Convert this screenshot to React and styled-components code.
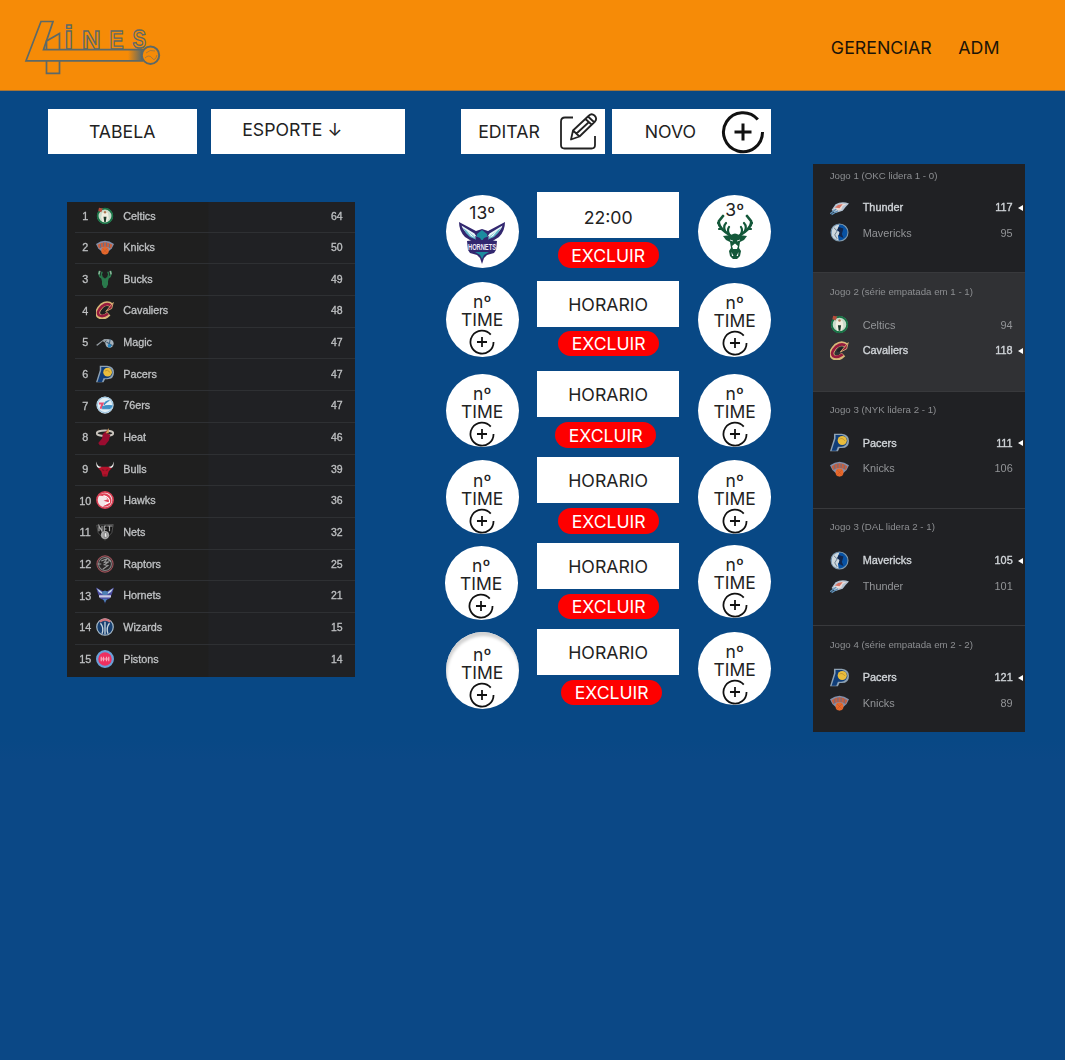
import React from "react";
import styled, { createGlobalStyle } from "styled-components";

const GlobalStyle = createGlobalStyle`
  * { box-sizing: border-box; }
  body { margin: 0; background: #084885; font-family: Inter, "Liberation Sans", sans-serif; }
`;

const Page = styled.div`
  height: 1060px;
  overflow: hidden;
  background: linear-gradient(#084885 0 740px, #0b4886 760px);
`;
const Header = styled.header`
  height: 91px;
  display: flex;
  justify-content: space-between;
  background: #f68b07;
  border-bottom: 1px solid #a87435;
`;
const Nav = styled.nav`
  display: flex;
  gap: 26.5px;
  padding: 36.5px 65.5px 0 0;
`;
const NavLink = styled.a`
  font-size: 17.8px;
  line-height: 22px;
  color: #1c1408;
`;
const Main = styled.main`
  display: flex;
  align-items: flex-start;
  padding-left: 47.7px;
`;
const LeftColumn = styled.section`
  width: 398px;
  padding-top: 18.3px;
`;
const CenterColumn = styled.section`
  width: 367px;
  padding-top: 18.3px;
`;
const Toolbar = styled.div`
  display: flex;
  gap: ${(p) => p.$gap}px;
  padding-left: ${(p) => p.$indent || 0}px;
`;
const Button = styled.button`
  display: flex;
  align-items: center;
  justify-content: ${(p) => (p.$center ? "center" : "flex-start")};
  gap: ${(p) => p.$gap || 0}px;
  width: ${(p) => p.$w}px;
  height: 45px;
  border: 0;
  padding: 0 0 ${(p) => p.$lift || 0}px ${(p) => p.$left || 0}px;
  background: #fff;
  font: 400 17.7px/22px Inter, sans-serif;
  color: #222;
  white-space: nowrap;
  svg { flex: none; }
`;

/* standings */
const Standings = styled.div`
  width: 288px;
  margin: 47.5px 0 0 19px;
  padding-left: 8px;
  height: 475px;
  background: linear-gradient(90deg, #1f1f1f 0 141px, #202124 142px);
  font-family: "Liberation Sans", Arial, sans-serif;
`;
const Standing = styled.div`
  display: grid;
  grid-template-columns: 21px 18px 1fr 40px;
  align-items: center;
  height: ${(p) => (p.$first ? 30 : 31.68)}px;
  padding: 0 12px 2.5px 0;
  border-top: ${(p) => (p.$first ? "0" : "1px solid #2e3033")};
  font-size: 10.8px;
  color: #bfc1c3;
  -webkit-text-stroke: 0.3px #bfc1c3;
  > * { filter: blur(0.45px); }
`;
const Rank = styled.span`text-align: center; padding-top: 1px;`;
const Name = styled.span`padding-left: 9.5px;`;
const Points = styled.span`text-align: right; font-size: 10.5px;`;

/* schedule */
const Schedule = styled.div`padding-top: 38px;`;
const Match = styled.div`
  display: grid;
  grid-template-columns: 92px 141px 73px;
  column-gap: 0;
  justify-content: start;
  align-items: start;
  height: ${(p) => p.$h}px;
`;
const Team = styled.div`
  display: flex;
  flex-direction: column;
  align-items: center;
  width: 73px;
  height: ${(p) => p.$h || 73.5}px;
  margin-top: ${(p) => p.$top}px;
  margin-left: ${(p) => p.$x || 0}px;
  padding-top: ${(p) => p.$pad || 11}px;
  border-radius: 50%;
  background: #fff;
  box-shadow: ${(p) => (p.$shade ? "inset 1px 4px 3px #d2d2d2" : "none")};
  font-size: 17.5px;
  line-height: 18px;
  color: #222;
  svg { flex: none; display: block; }
`;
const Slot = styled.div`display: flex; flex-direction: column; align-items: center;`;
const Time = styled.div`
  width: 141.5px;
  height: 45.7px;
  display: flex;
  align-items: center;
  justify-content: center;
  padding-top: ${(p) => p.$drop || 0}px;
  background: #fff;
  font-size: 17.7px;
  color: #222;
`;
const Remove = styled.button`
  width: 101px;
  height: 25.5px;
  margin: ${(p) => p.$top}px 0 0 ${(p) => p.$x}px;
  padding: 0;
  border: 0;
  border-radius: 13px;
  background: #fe0000;
  color: #fff;
  font: 400 17.6px/25px Inter, sans-serif;
`;
const AwaySide = styled.div`padding-left: 19.5px;`;

/* playoffs */
const Playoffs = styled.aside`
  width: 212px;
  margin-top: 72.7px;
  font-family: "Liberation Sans", Arial, sans-serif;
`;
const Game = styled.article`
  height: ${(p) => p.$h}px;
  padding: ${(p) => p.$pad}px 0 0 17px;
  background: ${(p) => (p.$active ? "#303134" : "#202124")};
  border-top: ${(p) => (p.$plain ? "0" : "1px solid #38393c")};
`;
const GameTitle = styled.div`
  height: 12px;
  margin-bottom: ${(p) => p.$gap || 13.5}px;
  font-size: 9.7px;
  line-height: 12px;
  color: #8c8e91;
  white-space: nowrap;
  filter: blur(0.35px);
`;
const Side = styled.div`
  display: grid;
  grid-template-columns: 19px 1fr 40px 12px;
  align-items: center;
  height: 25.7px;
  font-size: 10.9px;
  color: ${(p) => (p.$win ? "#d0d4d8" : "#929497")};
  -webkit-text-stroke: ${(p) => (p.$win ? 0.35 : 0)}px currentColor;
  > * { filter: blur(0.35px); }
`;
const SideName = styled.span`padding-left: 14px;`;
const Score = styled.span`text-align: right;`;
const Winner = styled.span`
  width: 0;
  height: 0;
  margin-left: 5.5px;
  margin-top: 1px;
  border: 3px solid transparent;
  border-right: 5px solid #fff;
  border-left: 0;
`;

const marks = {
  Celtics: (
    <>
      <circle cx="12" cy="12" r="10.5" fill="#c9dccb" />
      <circle cx="12" cy="12" r="9.8" fill="none" stroke="#197346" strokeWidth="2.4" />
      <path d="M8 8l4-3 4 3 1 7-3 5H9l-2-6z" fill="#f0eee0" />
      <path d="M10 13h4l-1 7h-2z" fill="#18382a" />
      <path d="M4 1l5 1-2 5-4-2z" fill="#b74c3c" />
      <circle cx="12" cy="7" r="1.6" fill="#ac7954" />
    </>
  ),
  Knicks: (
    <>
      <path d="M0 8q12-9 24 0l-3 6-9 8-9-8z" fill="#8290ac" />
      <path d="M2 9q10-7 20 0l-2 5q-8-5-16 0z" fill="#c66040" />
      <path d="M6 8v5M10 6v5M14 6v5M18 8v5" stroke="#686e86" strokeWidth="1.3" />
      <circle cx="12" cy="17" r="5" fill="#e8682a" />
      <path d="M9 14l6 6M15 14l-6 6" stroke="#b95630" strokeWidth=".7" />
    </>
  ),
  Bucks: (
    <g fill="none" stroke="#2a7a4c" strokeWidth="2" strokeLinecap="round">
      <path d="M10 11Q3 10 4 2M14 11q7-1 6-9M8 9Q6 6 8 3M16 9q2-3 0-6" />
      <path d="M4 5L5 2M20 5l-1-3" stroke="#8fb39c" />
      <path d="M8 11l2 1h4l2-1-1 4v4l-2 4h-2l-2-4v-4z" fill="#2a7a4c" />
    </g>
  ),
  Cavaliers: (
    <>
      <path d="M21 6Q15 1 8 6q-9 9-4 14 6 4 13-3" fill="none" stroke="#d9b878" strokeWidth="6.4" />
      <path d="M20 6Q15 2 8 7q-8 8-4 12 5 3 12-2" fill="none" stroke="#961a3e" strokeWidth="3.4" />
      <path d="M9 14Q8 10 14 8l4 0-3 5z" fill="#202124" />
      <path d="M13 14L23 2l-2 8z" fill="#961a3e" stroke="#d9b878" strokeWidth="1.1" />
    </>
  ),
  Magic: (
    <>
      <path d="M0 16L11 8h8l-7 3 2 3-5-3-7 6z" fill="#939ba1" />
      <circle cx="18" cy="14" r="5.5" fill="#a8b4be" />
      <path d="M14 12l8 5M19 8l-2 11" stroke="#3e5e78" strokeWidth="1.4" />
      <circle cx="18" cy="17" r="2.4" fill="#2483bf" />
    </>
  ),
  Pacers: (
    <>
      <path d="M5 1h10q9 1 9 9 0 9-9 9h-3l-2 4H0L5 7z" fill="#8ea2b4" />
      <path d="M7 2.5h8q7 2 7 8-1 6-8 7h-4l-2 5H2L7 7z" fill="#103d78" />
      <circle cx="15.5" cy="9.5" r="5.8" fill="#e9bd3c" />
      <path d="M12 8q3-3 7 2" stroke="#b98d2e" fill="none" />
    </>
  ),
  "76ers": (
    <>
      <circle cx="12" cy="12" r="11.5" fill="#e2eff6" />
      <circle cx="12" cy="12" r="10.3" fill="none" stroke="#9cc4e0" strokeWidth="1.4" />
      <path d="M4 10h5l-3 7" stroke="#e64f73" strokeWidth="2.6" fill="none" />
      <path d="M18 6q-7 1-7 6M9 14q6-2 12-1-1 4-5 4H9z" stroke="#3f8fc6" strokeWidth="1.6" fill="#3f8fc6" />
    </>
  ),
  Heat: (
    <>
      <ellipse cx="12" cy="7" rx="11" ry="3.6" fill="none" stroke="#c9c4bd" strokeWidth="2.5" />
      <path d="M9 8l7-6-1 6 4 1-2 8-5 6H5l-2-3 5-6z" fill="#9a0c30" />
      <path d="M14 5l3-5v7h-4z" fill="#ce9c56" />
    </>
  ),
  Bulls: (
    <>
      <path d="M1 2q0 7 6 7l2 2H5Q-1 10 1 2zM23 2q0 7-6 7l-2 2h4q6-1 4-9z" fill="#f1eeee" />
      <path d="M3 11l5-2h8l5 2-4 4-2 7H9l-2-7z" fill="#b3122b" />
      <path d="M8 13l3 1M16 13l-3 1M10 20h4" stroke="#6a101c" />
    </>
  ),
  Hawks: (
    <>
      <circle cx="12" cy="12" r="10.8" fill="#f3e6e8" stroke="#dc4156" strokeWidth="2.2" />
      <path d="M3 6q8-6 15 0 4 5 2 10-4 6-11 5l8-6-7-2 6-2-4-4z" fill="#dd4156" />
      <path d="M10 6q9 3 8 9l-6 3" stroke="#fff" strokeWidth="1.5" fill="none" />
    </>
  ),
  Nets: (
    <>
      <path d="M1 3l22-1-2 11-9 10-9-10z" fill="#151515" stroke="#777" strokeWidth=".8" />
      <path d="M4 11V4l4 7V4M15 4h7M18 4v7M11 4h3M11 8h3M11 4v7" stroke="#aaa" strokeWidth="1.6" />
      <circle cx="12" cy="16" r="5.4" fill="#aaa" />
      <path d="M11 13v6h2q4-1 1-3 2-2-1-3z" fill="#eee" stroke="#444" strokeWidth=".7" />
    </>
  ),
  Raptors: (
    <>
      <circle cx="12" cy="12" r="10.8" fill="#2a2728" stroke="#a0525a" strokeWidth="1.4" />
      <circle cx="12" cy="12" r="8.6" fill="none" stroke="#858585" strokeWidth="1.4" />
      <path d="M7 8l8-3-4 5 6-1-6 4 5 1-7 5M2 12h5M16 6l4 3" stroke="#999" strokeWidth="1.4" fill="none" />
    </>
  ),
  Hornets: (
    <>
      <path d="M0 2l9 5h6l9-5-3 9-3 6-5 2-1 5-1-5-5-2-3-6z" fill="#4a4aa0" />
      <path d="M1 3l7 5 1 3-5-3zM23 3l-7 5-1 3 5-3z" fill="#c5d9ee" />
      <path d="M8 8l4-2 4 2-1 4H9zM9 17h6l-3 5z" fill="#4d7fb5" />
      <path d="M4 12.3h16v3H4z" fill="#c9c9e4" />
    </>
  ),
  Wizards: (
    <>
      <circle cx="12" cy="12" r="11" fill="#173f70" stroke="#a6bac9" strokeWidth="1.6" />
      <path d="M5 5Q12-1 19 5" stroke="#d0777f" strokeWidth="3" fill="none" />
      <path d="M12 5v17M6 7q5 6 2 14M18 7q-5 6-2 14" stroke="#ccd8df" strokeWidth="1.7" fill="none" />
    </>
  ),
  Pistons: (
    <>
      <circle cx="12" cy="12" r="10.5" fill="#ee2f60" stroke="#6aa0d8" strokeWidth="3" />
      <path d="M6 12h12M7 9v6M10 9v6M14 9v6M17 9v6" stroke="#f6aabc" strokeWidth="1.6" />
    </>
  ),
  Thunder: (
    <>
      <path d="M2 15L7 8q8-5 17-1l-4 4-4 5-9 3z" fill="#b4c3d3" />
      <path d="M5 13l9-6 7 1-5 2-2 5-7 1z" fill="#eadcd8" />
      <path d="M6 12q5-5 10-4l-4 5z" fill="#d77363" />
      <path d="M0 20l8-6M2 21l8-5" stroke="#5f92bb" strokeWidth="1.6" />
    </>
  ),
  Mavericks: (
    <>
      <circle cx="12" cy="12" r="10.7" fill="#0751a2" stroke="#7f98ab" strokeWidth="1.4" />
      <path d="M12 2Q2 3 2 12t9 10l-1-6 3-4-4-3z" fill="#cdd7dd" />
      <path d="M11 5l6 2-2 7 2 5-6-3 1-5-3-2z" fill="#12264b" />
      <path d="M5 6l4 4-3 5 3 5" stroke="#56697b" fill="none" />
    </>
  ),
};

const Logo = ({ team, size = 18 }) => (
  <svg width={size} height={size} viewBox="0 0 24 24">{marks[team]}</svg>
);

const HornetsMark = () => (
  <svg width="46" height="43" viewBox="0 0 46 43">
    <path d="M0 0l17 9 6-2 6 2L46 0q0 9-6 15l-8 5H14l-8-5Q0 9 0 0z" fill="#32276f" />
    <path d="M2.500 3.500l13 8 4 6-8-4Q4 9 2.500 3.500zM43.500 3.500l-13 8-4 6 8-4q7.500-4 9-10z" fill="#e8f5f8" />
    <path d="M4 6l11 8 3 4-7-3Q6 11 4 6zM42 6l-11 8-3 4 7-3q5-4 7-9z" fill="#5fb6c8" />
    <path d="M7 8l9 8-4-2zM39 8l-9 8 4-2z" fill="#fff" />
    <path d="M18 12l5-4 5 4 1 6H17z" fill="#1b8b9f" />
    <path d="M16 14l5 2 2 3 2-3 5-2-2 7H18z" fill="#32276f" />
    <path d="M8 19l8-1h14l8 1-1 9-2 3-7 2-3 3-2 6-2-6-3-3-7-2-2-3z" fill="#32276f" />
    <text x="9" y="27.5" fontFamily="Liberation Sans, sans-serif" fontWeight="700" fontSize="8.5" textLength="28" lengthAdjust="spacingAndGlyphs" fill="#eee9f6">HORNETS</text>
    <path d="M16 30h14l-5 3-2 4-2-4z" fill="#1b8b9f" />
  </svg>
);
const BucksMark = () => (
  <svg width="36" height="45" viewBox="0 0 36 45">
    <g fill="none" stroke="#14583a" strokeLinecap="round" strokeLinejoin="round">
      <path strokeWidth="2.7" d="M14 22Q8 18 5 15 1 11 2 7L6 2M22 22q6-4 9-7 4-4 3-8L30 2" />
      <path strokeWidth="2.200" d="M3 12L1 9M33 12l2-3M8 17Q6 12 9 9M28 17q2-5-1-8M12 20q-2-4 0-7M24 20q2-4 0-7M5 15l-3 0M31 15h3" />
    </g>
    <path d="M6 22l8-1q4-3 8 0l8 1-3 4-4 2-1 6 2 3-1 5-3 3h-4l-3-3-1-5 2-3-1-6-4-2z" fill="#14583a" />
    <path d="M15 32l3-2.500 3 2.500-1 3h-4zM14.500 38l2 4h-1.500zM21.500 38l-2 4h1.500z" fill="#fff" />
    <path d="M13 26l3 1M23 26l-3 1" stroke="#fff" strokeWidth=".8" />
  </svg>
);
const PlusCircle = ({ size, weight }) => (
  <svg width={size} height={size} viewBox="0 0 44 44" fill="none" stroke="#111" strokeWidth={weight}>
    <path d="M41.5 22A19.5 19.5 0 1 1 36.8 9.500M22 13.500v17M13.500 22h17" />
  </svg>
);
const PencilIcon = () => (
  <svg width="40" height="40" viewBox="0 0 40 40" fill="none" stroke="#222" strokeWidth="1.8" strokeLinejoin="round">
    <path d="M14 5.500H6Q2 5.500 2 9.500V33q0 3.500 3.500 3.500h27q3.500 0 3.500-3.500v-9" />
    <path d="M12 27.500l2-9L30 3.500q2.500-2.500 5.500 0 3 3 .5 6L20.500 24.500zM14 18.500l6.500 6M26.500 7l6.500 6M29 4.500l6.500 6M17.500 21.500L30 10" />
  </svg>
);
const Brand = () => (
  <svg width="180" height="90" viewBox="0 0 180 90" fill="none" stroke="#5c6968" strokeWidth="1.7">
    <defs>
      <linearGradient id="trail">
        <stop stopColor="#5c6968" stopOpacity="0" />
        <stop offset="1" stopColor="#5c6968" />
      </linearGradient>
    </defs>
    <path d="M143 49.700H43.500L53 21.500H41L26 60.800H143" />
    <path d="M46.500 49V41L59.500 33.500V49M46.500 61V73.300H59.500V61" />
    <rect x="128" y="50" width="14" height="10" fill="url(#trail)" stroke="none" />
    <g fontFamily="Liberation Sans, sans-serif" fontWeight="700" strokeWidth="1.4">
      <text x="64" y="49" fontSize="34">i</text>
      <text x="82" y="49" fontSize="26.500" textLength="18.500" lengthAdjust="spacingAndGlyphs">N</text>
      <text x="109.500" y="49" fontSize="26.500" textLength="14" lengthAdjust="spacingAndGlyphs">E</text>
      <text x="132.500" y="48" fontSize="25.500" textLength="13.500" lengthAdjust="spacingAndGlyphs">S</text>
    </g>
    <circle cx="150.500" cy="55.200" r="8.700" fill="#f68b07" strokeWidth="2" />
    <path d="M146 53q4-4 9-2M145 58q4-4 7 0t5-3" strokeWidth=".8" opacity=".65" />
  </svg>
);

const table = [
  ["Celtics", 64], ["Knicks", 50], ["Bucks", 49], ["Cavaliers", 48], ["Magic", 47],
  ["Pacers", 47], ["76ers", 47], ["Heat", 46], ["Bulls", 39], ["Hawks", 36],
  ["Nets", 32], ["Raptors", 25], ["Hornets", 21], ["Wizards", 15], ["Pistons", 14],
];
const openMatches = [
  { h: 90, home: { $top: 0.5, $h: 75.5 }, away: { $top: 1.5, $h: 74.5 }, remove: { $top: 4, $x: 1 } },
  { h: 86, home: { $top: 2.5 }, away: { $top: 2.5 }, remove: { $top: 5.3, $x: -5 } },
  { h: 86, home: { $top: 3, $pad: 12 }, away: { $top: 3, $pad: 12 }, remove: { $top: 5.3, $x: 1 } },
  { h: 86, home: { $top: 3, $x: -1 }, away: { $top: 1.5 }, remove: { $top: 4.8, $x: 1 } },
  { h: 86, home: { $top: 2.5, $h: 77, $pad: 14, $shade: true }, away: { $top: 2.5 }, remove: { $top: 5, $x: 7 } },
];
const games = [
  { title: "Jogo 1 (OKC lidera 1 - 0)", h: 108, pad: 6, gap: 12.5, plain: true, sides: [["Thunder", 117, true], ["Mavericks", 95]] },
  { title: "Jogo 2 (série empatada em 1 - 1)", h: 119, pad: 13.5, active: true, sides: [["Celtics", 94], ["Cavaliers", 118, true]] },
  { title: "Jogo 3 (NYK lidera 2 - 1)", h: 117, pad: 12.5, sides: [["Pacers", 111, true], ["Knicks", 106]] },
  { title: "Jogo 3 (DAL lidera 2 - 1)", h: 117, pad: 12.5, gap: 14, sides: [["Mavericks", 105, true], ["Thunder", 101]] },
  { title: "Jogo 4 (série empatada em 2 - 2)", h: 107, pad: 13, sides: [["Pacers", 121, true], ["Knicks", 89]] },
];

const EmptyTeam = (props) => (
  <Team {...props}>
    <span>nº</span>
    <span>TIME</span>
    <PlusCircle size={26} weight={3} />
  </Team>
);

export default function App() {
  return (
    <Page>
      <GlobalStyle />
      <Header>
        <Brand />
        <Nav>
          <NavLink>GERENCIAR</NavLink>
          <NavLink>ADM</NavLink>
        </Nav>
      </Header>
      <Main>
        <LeftColumn>
          <Toolbar $gap={14}>
            <Button $w={149} $center>TABELA</Button>
            <Button $w={194.5} $left={31.5} $lift={3}>ESPORTE ↓</Button>
          </Toolbar>
          <Standings>
            {table.map(([team, points], i) => (
              <Standing key={team} $first={i === 0}>
                <Rank>{i + 1}</Rank>
                <Logo team={team} />
                <Name>{team}</Name>
                <Points>{points}</Points>
              </Standing>
            ))}
          </Standings>
        </LeftColumn>
        <CenterColumn>
          <Toolbar $gap={6.5} $indent={15}>
            <Button $w={144.5} $left={17.5} $gap={19}>EDITAR <PencilIcon /></Button>
            <Button $w={159} $left={33} $gap={25}>NOVO <PlusCircle size={44} weight={3} /></Button>
          </Toolbar>
          <Schedule>
            <Match $h={89}>
              <Team $top={3} $h={73} $pad={9}>
                13º
                <HornetsMark />
              </Team>
              <Slot>
                <Time $drop={5}>22:00</Time>
                <Remove $top={4.5} $x={0}>EXCLUIR</Remove>
              </Slot>
              <AwaySide>
                <Team $top={3} $h={73} $pad={5.5}>
                  <span style={{ marginBottom: -5 }}>3º</span>
                  <BucksMark />
                </Team>
              </AwaySide>
            </Match>
            {openMatches.map((m, i) => (
              <Match key={i} $h={m.h}>
                <EmptyTeam {...m.home} />
                <Slot>
                  <Time>HORARIO</Time>
                  <Remove {...m.remove}>EXCLUIR</Remove>
                </Slot>
                <AwaySide><EmptyTeam {...m.away} /></AwaySide>
              </Match>
            ))}
          </Schedule>
        </CenterColumn>
        <Playoffs>
          {games.map((g) => (
            <Game key={g.title} $h={g.h} $pad={g.pad} $active={g.active} $plain={g.plain}>
              <GameTitle $gap={g.gap}>{g.title}</GameTitle>
              {g.sides.map(([team, score, win]) => (
                <Side key={team} $win={win}>
                  <Logo team={team} size={19} />
                  <SideName>{team}</SideName>
                  <Score>{score}</Score>
                  {win && <Winner />}
                </Side>
              ))}
            </Game>
          ))}
        </Playoffs>
      </Main>
    </Page>
  );
}
